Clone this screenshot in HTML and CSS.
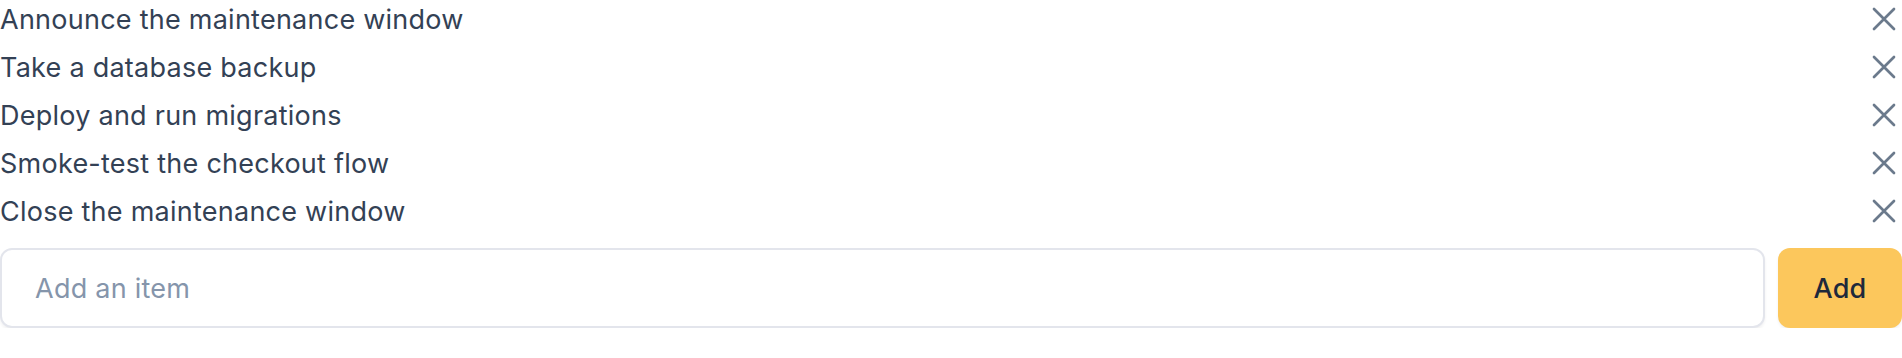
FILE: index.html
```html
<!DOCTYPE html>
<html>
<head>
<meta charset="utf-8">
<link rel="stylesheet" href="styles.css">
</head>
<body>
<div class="todo">
  <ul class="list">
    <li class="item"><span class="label">Announce the maintenance window</span><button class="remove" aria-label="Remove"><svg viewBox="0 0 28 28" width="28" height="28"><path d="M4 4L24 24M24 4L4 24"/></svg></button></li>
    <li class="item"><span class="label">Take a database backup</span><button class="remove" aria-label="Remove"><svg viewBox="0 0 28 28" width="28" height="28"><path d="M4 4L24 24M24 4L4 24"/></svg></button></li>
    <li class="item"><span class="label">Deploy and run migrations</span><button class="remove" aria-label="Remove"><svg viewBox="0 0 28 28" width="28" height="28"><path d="M4 4L24 24M24 4L4 24"/></svg></button></li>
    <li class="item"><span class="label">Smoke-test the checkout flow</span><button class="remove" aria-label="Remove"><svg viewBox="0 0 28 28" width="28" height="28"><path d="M4 4L24 24M24 4L4 24"/></svg></button></li>
    <li class="item"><span class="label">Close the maintenance window</span><button class="remove" aria-label="Remove"><svg viewBox="0 0 28 28" width="28" height="28"><path d="M4 4L24 24M24 4L4 24"/></svg></button></li>
  </ul>
  <form class="add-form">
    <input class="add-input" type="text" placeholder="Add an item">
    <button class="add-btn" type="button">Add</button>
  </form>
</div>
</body>
</html>
```
FILE: styles.css
```css
* { box-sizing: border-box; }
html, body { margin: 0; padding: 0; background: #fff; }
body {
  font-family: Inter, "Noto Sans", sans-serif;
  font-size: 27px;
  letter-spacing: 0.25px;
  color: #334155;
}
.todo { display: flex; flex-direction: column; padding-top: 1px; }
.list {
  list-style: none;
  margin: 0;
  padding: 0;
  display: flex;
  flex-direction: column;
  gap: 10px;
}
.item {
  display: flex;
  align-items: center;
  justify-content: space-between;
  height: 38px;
  line-height: 38px;
}
.label { color: #334155; }
.remove {
  border: 0;
  background: none;
  padding: 0;
  margin: 0 4px 2px 0;
  width: 28px;
  height: 28px;
  display: flex;
  align-items: center;
  justify-content: center;
  cursor: pointer;
}
.remove svg path {
  stroke: #6b7a8c;
  stroke-width: 2.7;
  stroke-linecap: round;
  fill: none;
}
.add-form {
  display: flex;
  gap: 13px;
  margin-top: 17px;
}
.add-input {
  flex: 1;
  height: 80px;
  border: 2px solid #e3e5ec;
  border-radius: 12px;
  padding: 0 33px;
  font-family: inherit;
  font-size: 27px;
  letter-spacing: 0.25px;
  color: #334155;
  box-shadow: 0 2px 3px rgba(15, 23, 42, 0.06);
  outline: none;
}
.add-input::placeholder { color: #8595ab; }
.add-btn {
  width: 124px;
  height: 80px;
  border: 0;
  border-radius: 12px;
  background: #fcc75c;
  color: #1e293b;
  font-family: inherit;
  font-size: 27px;
  letter-spacing: 0.25px;
  font-weight: 500;
  box-shadow: 0 2px 3px rgba(15, 23, 42, 0.06);
}
```
